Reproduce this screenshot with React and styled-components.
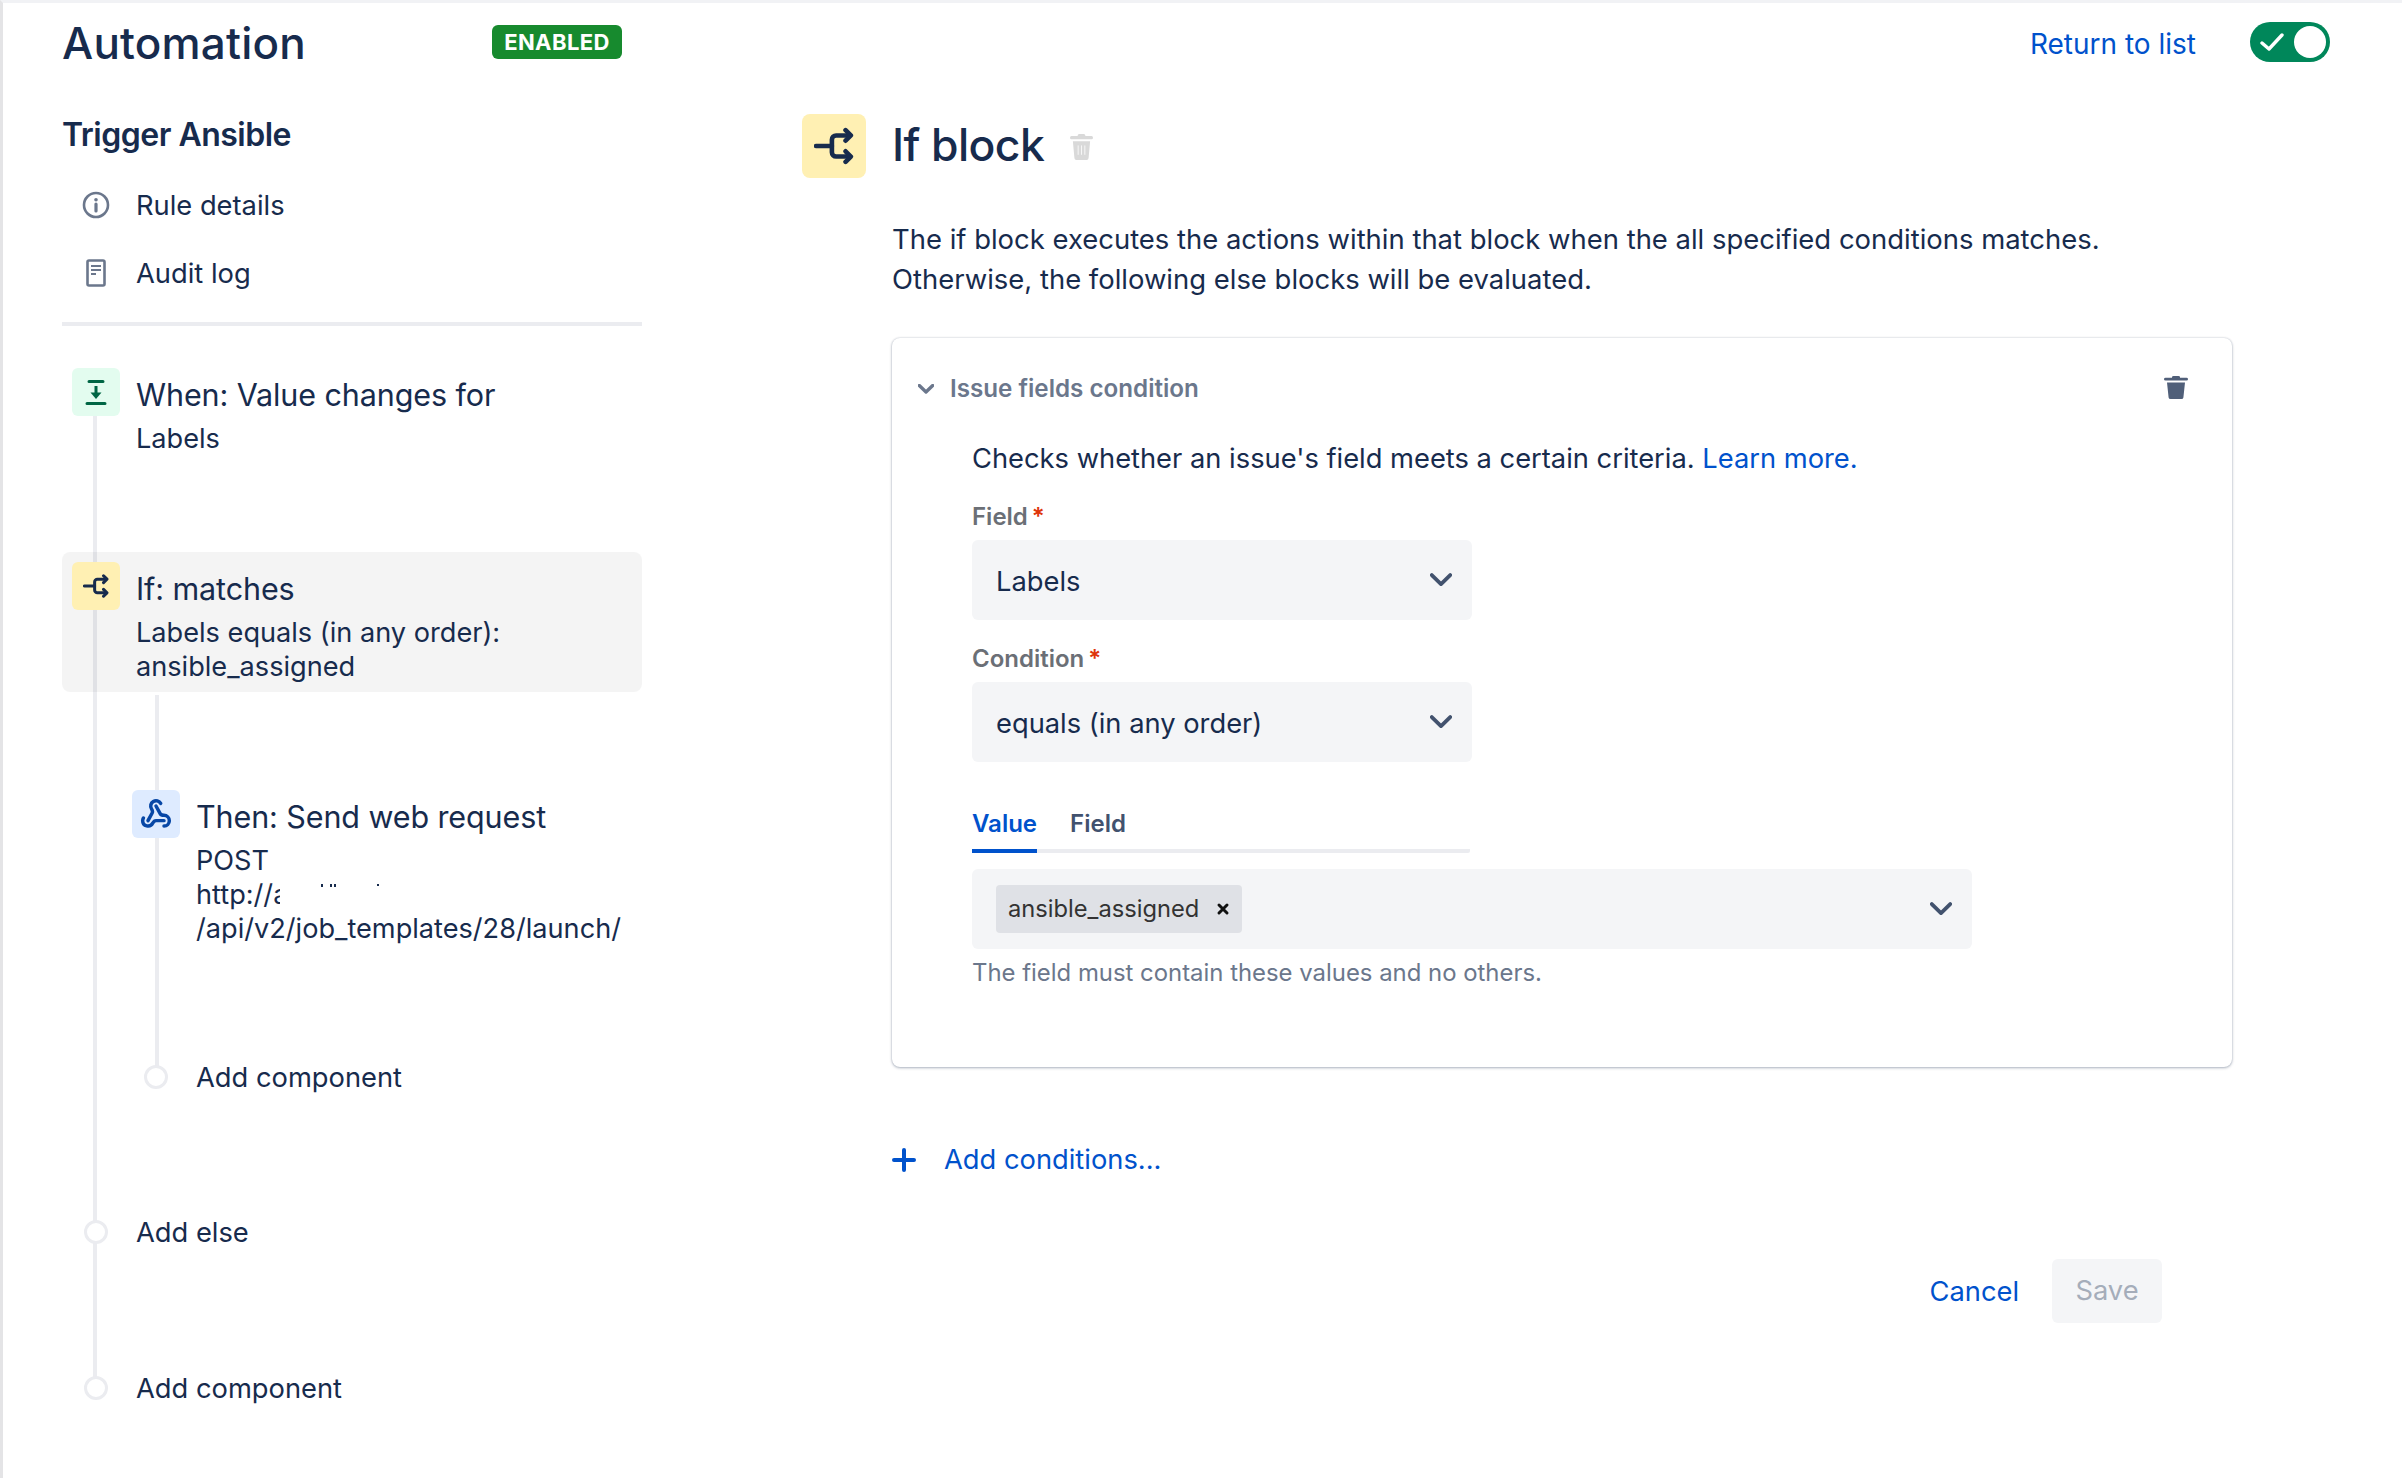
import React from 'react';
import styled, { createGlobalStyle } from 'styled-components';
import { Webhook } from 'lucide-react';

const GlobalStyle = createGlobalStyle`
  html, body {
    margin: 0;
    background: #fff;
  }
  body {
    font-family: Inter, "Noto Sans", "Liberation Sans", sans-serif;
    color: #172b4d;
    font-size: 27.3px;
    line-height: 34px;
  }
  * {
    box-sizing: border-box;
  }
`;

const Page = styled.div`
  display: flex;
  height: 1478px;
  overflow: hidden;
  padding-left: 59px;
  border-top: 3px solid #f1f2f5;
  border-left: 3px solid #e4e4e6;
`;

const Sidebar = styled.aside`
  width: 580px;
  flex: none;
`;

const TitleRow = styled.div`
  display: flex;
  align-items: center;
  padding-top: 13px;
  height: 67px;
`;

const Title = styled.h1`
  width: 430px;
  margin: 0;
  font-size: 44px;
  line-height: 54px;
  font-weight: 500;
  letter-spacing: 0.2px;
`;

const Badge = styled.span`
  width: 130px;
  height: 34px;
  margin-top: -2px;
  border-radius: 6px;
  background: #178a2e;
  color: #fff;
  font-size: 22px;
  font-weight: 700;
  line-height: 34px;
  text-align: center;
  letter-spacing: 0.4px;
`;

const RuleName = styled.h2`
  margin: 45px 0 16px;
  font-size: 32px;
  line-height: 40px;
  font-weight: 600;
  letter-spacing: -0.5px;
`;

const NavRow = styled.div`
  display: flex;
  align-items: center;
  height: 68px;
  gap: 16px;
  padding: 2px 0 0 10px;
`;

const NavIcon = styled.span`
  width: 48px;
  display: flex;
  justify-content: center;
  margin-top: -3px;
  color: #6b778c;
`;

const Divider = styled.hr`
  height: 4px;
  margin: 15px 0 0;
  border: 0;
  background: #ebecf0;
`;

const Tree = styled.div`
  position: relative;
  padding-top: ${(p) => p.$top}px;

  &::before {
    content: '';
    position: absolute;
    left: ${(p) => p.$lineLeft}px;
    top: ${(p) => p.$lineTop}px;
    bottom: 17px;
    width: 4px;
    background: #ebecf0;
  }
`;

const NestedTree = styled(Tree)`
  margin-left: 60px;
`;

const Node = styled.div`
  position: relative;
  display: flex;
  gap: 16px;
  padding: 0 10px;
  margin-top: ${(p) => p.$mt || 0}px;
  ${(p) => p.$active && `
    padding: 10px 10px 8px;
    border-radius: 8px;
    background: rgba(0, 0, 0, 0.045);
  `}
`;

const IconBox = styled.div`
  position: relative;
  z-index: 1;
  flex: none;
  width: 48px;
  height: 48px;
  display: flex;
  align-items: center;
  justify-content: center;
  border-radius: 6px;
  background: ${(p) => p.$bg};
  color: ${(p) => p.$fg};
`;

const NodeText = styled.div`
  padding-top: 10px;
  font-size: 27.15px;
  line-height: 34px;
`;

const NodeTitle = styled.div`
  font-size: 30.5px;
  line-height: 34px;
  margin-bottom: 10px;
  letter-spacing: -0.1px;
`;

const UrlLine = styled.div`
  display: flex;
  height: 34px;
`;

const Clipped = styled.span`
  display: inline-block;
  width: 84px;
  overflow: hidden;
  white-space: nowrap;
`;

const Remnant = styled.svg`
  margin: 6px 0 0 41px;
`;

const AddRow = styled.div`
  display: flex;
  align-items: center;
  gap: 16px;
  height: 34px;
  padding: 2px 0 0 10px;
  margin-top: ${(p) => p.$mt}px;
`;

const AddRail = styled.span`
  position: relative;
  z-index: 1;
  width: 48px;
  display: flex;
  justify-content: center;
  margin-top: -2px;
`;

const AddDot = styled.span`
  width: 24px;
  height: 24px;
  border-radius: 50%;
  border: 3px solid #ebecf0;
  background: #fff;
`;

const Main = styled.main`
  width: 1528px;
  flex: none;
  margin-left: 160px;
`;

const TopBar = styled.div`
  display: flex;
  justify-content: flex-end;
  align-items: center;
  height: 40px;
  margin-top: 19px;
  gap: 54px;
`;

const TextLink = styled.a`
  color: #0052cc;
  font-size: ${(p) => p.$size || 27.3}px;
  line-height: 34px;
  padding-top: ${(p) => p.$drop || 0}px;
`;

const Toggle = styled.div`
  width: 80px;
  height: 40px;
  display: flex;
  align-items: center;
  justify-content: space-between;
  padding: 0 4px 0 10px;
  border-radius: 20px;
  background: #00875a;
`;

const Knob = styled.span`
  width: 32px;
  height: 32px;
  border-radius: 50%;
  background: #fff;
`;

const BlockHeader = styled.div`
  display: flex;
  align-items: center;
  margin-top: 52px;
  height: 64px;
`;

const BlockIcon = styled.div`
  flex: none;
  width: 64px;
  height: 64px;
  margin-right: 26px;
  display: flex;
  align-items: center;
  justify-content: center;
  border-radius: 8px;
  background: #fff0b3;
  color: #172b4d;
`;

const BlockTitle = styled.h1`
  margin: -3px 26px 0 0;
  font-size: 44.5px;
  line-height: 64px;
  font-weight: 500;
  letter-spacing: -0.6px;
`;

const BlockTrash = styled.svg`
  margin-top: 2px;
`;

const Content = styled.div`
  width: 1340px;
  margin-left: 90px;
`;

const Intro = styled.p`
  margin: 41px 0 39px;
  font-size: 27.45px;
  line-height: 40px;
`;

const Card = styled.section`
  height: 729px;
  padding: 34px 44px 0 26px;
  border-radius: 8px;
  background: #fff;
  box-shadow: 0 1px 3px rgba(9, 30, 66, 0.3), 0 0 2px rgba(9, 30, 66, 0.2);
`;

const CardHeader = styled.div`
  display: flex;
  align-items: center;
  height: 34px;
`;

const CardTitle = styled.span`
  flex: 1;
  margin-left: 16px;
  color: #6b778c;
  font-size: 24.2px;
  font-weight: 600;
`;

const CardTrash = styled.svg`
  margin-top: -3px;
`;

const CardBody = styled.div`
  padding-left: 54px;
`;

const Description = styled.p`
  margin: 36px 0 0;
  font-size: 27.3px;
  line-height: 34px;
`;

const Label = styled.label`
  display: block;
  margin-top: ${(p) => p.$mt}px;
  margin-bottom: 9px;
  color: #6b6f76;
  font-size: 24px;
  font-weight: 600;
  line-height: 28px;

  span {
    color: #de350b;
    margin-left: 4px;
  }
`;

const SelectBox = styled.div`
  display: flex;
  align-items: center;
  justify-content: space-between;
  width: ${(p) => p.$w}px;
  height: 80px;
  margin-top: ${(p) => p.$mt || 0}px;
  padding: 0 20px 0 24px;
  border-radius: 6px;
  background: #f4f5f7;
`;

const SelectValue = styled.span`
  padding-top: 4px;
`;

const Tabs = styled.div`
  display: flex;
  gap: 33px;
  width: 498px;
  margin-top: 44px;
  border-bottom: 4px solid #ebecf0;
  border-radius: 2px;
`;

const Tab = styled.div`
  height: 47px;
  margin-bottom: -4px;
  padding-top: 4px;
  font-size: 24px;
  font-weight: 600;
  line-height: 28px;
  color: ${(p) => (p.$active ? '#0052cc' : '#42526e')};
  border-bottom: 4px solid ${(p) => (p.$active ? '#0052cc' : 'transparent')};
`;

const Chip = styled.div`
  display: flex;
  align-items: center;
  gap: 17px;
  height: 48px;
  padding: 0 12px;
  border-radius: 4px;
  background: #dfe1e6;
  color: #333;
  font-size: 23.7px;
`;

const Hint = styled.div`
  margin-top: 10px;
  color: #6b778c;
  font-size: 23.9px;
  line-height: 28px;
`;

const AddConditions = styled.div`
  display: flex;
  align-items: center;
  gap: 28px;
  height: 34px;
  margin-top: 76px;
`;

const Footer = styled.div`
  display: flex;
  justify-content: flex-end;
  align-items: center;
  gap: 33px;
  margin-top: 82px;
  padding-right: 70px;
`;

const SaveButton = styled.div`
  width: 110px;
  height: 64px;
  display: flex;
  align-items: center;
  justify-content: center;
  border-radius: 6px;
  background: #f4f5f7;
  color: #a5adba;
`;

function BranchIcon({ size }) {
  return (
    <svg width={size} height={size} viewBox="0 0 38 38" fill="none" stroke="currentColor" strokeWidth="4.4" strokeLinecap="round" strokeLinejoin="round">
      <path d="M2 19h15" />
      <path d="M33 9H21a4 4 0 0 0-4 4v12a4 4 0 0 0 4 4h12" />
      <path d="M30 4l5 5-5 5M30 24l5 5-5 5" />
    </svg>
  );
}

function TriggerIcon() {
  return (
    <svg width="48" height="48" viewBox="0 0 48 48" fill="none" stroke="currentColor">
      <path d="M17 13.5h14M15 35.5h18" strokeWidth="3" strokeLinecap="round" />
      <path d="M24 18v8" strokeWidth="3" />
      <path d="M18.5 24.5h11L24 31z" fill="currentColor" stroke="none" />
    </svg>
  );
}

function InfoIcon() {
  return (
    <svg width="28" height="28" viewBox="0 0 28 28" fill="none" stroke="currentColor">
      <circle cx="14" cy="14" r="12" strokeWidth="2.6" />
      <circle cx="14" cy="8.8" r="1.8" fill="currentColor" stroke="none" />
      <path d="M14 13v7" strokeWidth="3.2" strokeLinecap="round" />
    </svg>
  );
}

function DocIcon() {
  return (
    <svg width="20" height="28" viewBox="0 0 20 28" fill="none" stroke="currentColor">
      <rect x="1.5" y="1.5" width="17" height="25" rx="1.5" strokeWidth="2.6" />
      <path d="M5 7h10M5 11h10M5 15h5" strokeWidth="2.2" />
    </svg>
  );
}

function TrashPaths({ color, lines }) {
  return (
    <>
      <path d="M8 3V2.5A1.5 1.5 0 0 1 9.5 1h5A1.5 1.5 0 0 1 16 2.5V3h6.5a1.5 1.5 0 0 1 0 3h-21a1.5 1.5 0 0 1 0-3z" fill={color} />
      <path d="M3 8h18l-1.6 16.2A2 2 0 0 1 17.4 26H6.6a2 2 0 0 1-2-1.8z" fill={color} />
      {lines && <path d="M8.5 12v9M12 12v9M15.5 12v9" stroke="#fff" strokeWidth="0.8" />}
    </>
  );
}

function Chevron({ width, color, weight }) {
  return (
    <svg width={width} height={width * 0.6} viewBox="0 0 22 13" fill="none" stroke={color} strokeWidth={weight} strokeLinecap="round" strokeLinejoin="round">
      <path d="M1.8 2L11 11l9.2-9" />
    </svg>
  );
}

export default function App() {
  return (
    <>
      <GlobalStyle />
      <Page>
        <Sidebar>
          <TitleRow>
            <Title>Automation</Title>
            <Badge>ENABLED</Badge>
          </TitleRow>
          <RuleName>Trigger Ansible</RuleName>
          <NavRow>
            <NavIcon><InfoIcon /></NavIcon>
            Rule details
          </NavRow>
          <NavRow>
            <NavIcon><DocIcon /></NavIcon>
            Audit log
          </NavRow>
          <Divider />
          <Tree $top={42} $lineLeft={31} $lineTop={90}>
            <Node>
              <IconBox $bg="#e3fcef" $fg="#006644"><TriggerIcon /></IconBox>
              <NodeText>
                <NodeTitle>When: Value changes for</NodeTitle>
                Labels
              </NodeText>
            </Node>
            <Node $active $mt={96}>
              <IconBox $bg="#fff0b3" $fg="#172b4d"><BranchIcon size={26} /></IconBox>
              <NodeText>
                <NodeTitle>If: matches</NodeTitle>
                Labels equals (in any order):
                <br />
                ansible_assigned
              </NodeText>
            </Node>
            <NestedTree $top={98} $lineLeft={33} $lineTop={3}>
              <Node>
                <IconBox $bg="#deebff" $fg="#0747a6"><Webhook size={32} strokeWidth={2.6} /></IconBox>
                <NodeText>
                  <NodeTitle>Then: Send web request</NodeTitle>
                  POST
                  <UrlLine>
                    <Clipped>http://a</Clipped>
                    <Remnant width="60" height="4" viewBox="0 0 60 4" fill="#172b4d">
                      <rect x="0" y="0" width="2" height="3" />
                      <rect x="9" y="0" width="2" height="3" />
                      <rect x="13" y="0" width="2" height="3" />
                      <rect x="56" y="0" width="2" height="2" />
                    </Remnant>
                  </UrlLine>
                  /api/v2/job_templates/28/launch/
                </NodeText>
              </Node>
              <AddRow $mt={114}>
                <AddRail><AddDot /></AddRail>
                Add component
              </AddRow>
            </NestedTree>
            <AddRow $mt={121}>
              <AddRail><AddDot /></AddRail>
              Add else
            </AddRow>
            <AddRow $mt={122}>
              <AddRail><AddDot /></AddRail>
              Add component
            </AddRow>
          </Tree>
        </Sidebar>
        <Main>
          <TopBar>
            <TextLink $size={28} $drop={3}>Return to list</TextLink>
            <Toggle>
              <svg width="24" height="20" viewBox="0 0 24 20" fill="none" stroke="#fff" strokeWidth="3.4" strokeLinecap="round" strokeLinejoin="round">
                <path d="M2 11l7 6L22 3" />
              </svg>
              <Knob />
            </Toggle>
          </TopBar>
          <BlockHeader>
            <BlockIcon><BranchIcon size={40} /></BlockIcon>
            <BlockTitle>If block</BlockTitle>
            <BlockTrash width="23" height="28" viewBox="0 0 24 27" preserveAspectRatio="none">
              <TrashPaths color="#d9d9d9" lines />
            </BlockTrash>
          </BlockHeader>
          <Content>
            <Intro>
              The if block executes the actions within that block when the all specified conditions matches.
              <br />
              Otherwise, the following else blocks will be evaluated.
            </Intro>
            <Card>
              <CardHeader>
                <Chevron width={16} color="#6b778c" weight={4.6} />
                <CardTitle>Issue fields condition</CardTitle>
                <CardTrash width="24" height="25" viewBox="0 0 24 27" preserveAspectRatio="none">
                  <TrashPaths color="#505f79" />
                </CardTrash>
              </CardHeader>
              <CardBody>
                <Description>
                  Checks whether an issue's field meets a certain criteria. <TextLink>Learn more.</TextLink>
                </Description>
                <Label $mt={27}>Field<span>*</span></Label>
                <SelectBox $w={500}>
                  <SelectValue>Labels</SelectValue>
                  <Chevron width={22} color="#42526e" weight={3.8} />
                </SelectBox>
                <Label $mt={25}>Condition<span>*</span></Label>
                <SelectBox $w={500}>
                  <SelectValue>equals (in any order)</SelectValue>
                  <Chevron width={22} color="#42526e" weight={3.8} />
                </SelectBox>
                <Tabs>
                  <Tab $active>Value</Tab>
                  <Tab>Field</Tab>
                </Tabs>
                <SelectBox $w={1000} $mt={16}>
                  <Chip>
                    ansible_assigned
                    <svg width="14" height="14" viewBox="0 0 14 14" stroke="#111" strokeWidth="3" strokeLinecap="round">
                      <path d="M3 3l8 8M11 3l-8 8" />
                    </svg>
                  </Chip>
                  <Chevron width={22} color="#42526e" weight={3.8} />
                </SelectBox>
                <Hint>The field must contain these values and no others.</Hint>
              </CardBody>
            </Card>
            <AddConditions>
              <svg width="24" height="24" viewBox="0 0 24 24" stroke="#0052cc" strokeWidth="4" strokeLinecap="round">
                <path d="M12 2v20M2 12h20" />
              </svg>
              <TextLink>Add conditions...</TextLink>
            </AddConditions>
            <Footer>
              <TextLink $drop={2}>Cancel</TextLink>
              <SaveButton>Save</SaveButton>
            </Footer>
          </Content>
        </Main>
      </Page>
    </>
  );
}
